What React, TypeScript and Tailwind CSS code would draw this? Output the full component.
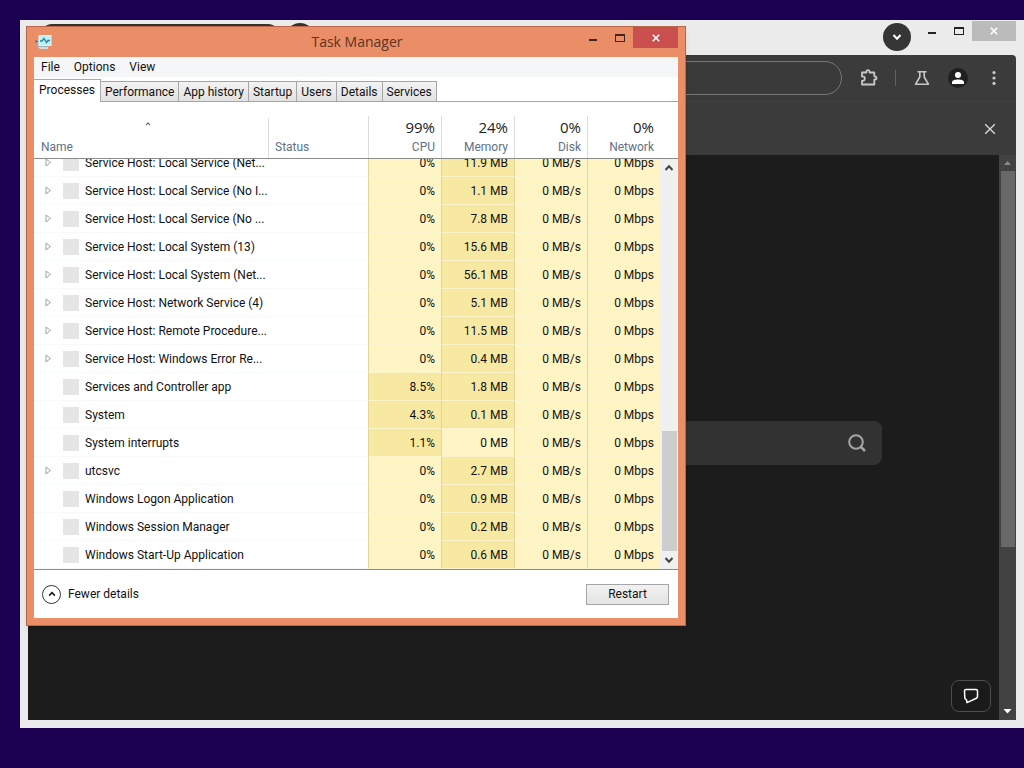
import React from "react";
import { clsx } from "clsx";

type Process = {
  name: string;
  cpu: string;
  memory: string;
  group?: boolean;
};

const processes: Process[] = [
  { name: "Service Host: Local Service (Net...", cpu: "0%", memory: "11.9 MB", group: true },
  { name: "Service Host: Local Service (No I...", cpu: "0%", memory: "1.1 MB", group: true },
  { name: "Service Host: Local Service (No ...", cpu: "0%", memory: "7.8 MB", group: true },
  { name: "Service Host: Local System (13)", cpu: "0%", memory: "15.6 MB", group: true },
  { name: "Service Host: Local System (Net...", cpu: "0%", memory: "56.1 MB", group: true },
  { name: "Service Host: Network Service (4)", cpu: "0%", memory: "5.1 MB", group: true },
  { name: "Service Host: Remote Procedure...", cpu: "0%", memory: "11.5 MB", group: true },
  { name: "Service Host: Windows Error Re...", cpu: "0%", memory: "0.4 MB", group: true },
  { name: "Services and Controller app", cpu: "8.5%", memory: "1.8 MB" },
  { name: "System", cpu: "4.3%", memory: "0.1 MB" },
  { name: "System interrupts", cpu: "1.1%", memory: "0 MB" },
  { name: "utcsvc", cpu: "0%", memory: "2.7 MB", group: true },
  { name: "Windows Logon Application", cpu: "0%", memory: "0.9 MB" },
  { name: "Windows Session Manager", cpu: "0%", memory: "0.2 MB" },
  { name: "Windows Start-Up Application", cpu: "0%", memory: "0.6 MB" },
];

const totals = [
  { label: "CPU", value: "99%" },
  { label: "Memory", value: "24%" },
  { label: "Disk", value: "0%" },
  { label: "Network", value: "0%" },
];

const tabs = ["Performance", "App history", "Startup", "Users", "Details", "Services"];

const Chevron = ({ down = false, className }: { down?: boolean; className?: string }) => (
  <svg viewBox="0 0 10 10" className={className} fill="none" stroke="currentColor" strokeWidth="2" aria-hidden="true">
    <path d={down ? "M1.5 3 L5 6.8 L8.5 3" : "M1.5 7 L5 3.2 L8.5 7"} />
  </svg>
);

const Cross = ({ className, width = 2 }: { className?: string; width?: number }) => (
  <svg viewBox="0 0 10 10" className={className} fill="none" stroke="currentColor" strokeWidth={width} aria-hidden="true">
    <path d="M1 1 L9 9 M9 1 L1 9" />
  </svg>
);

const Columns = () => (
  <colgroup>
    <col />
    <col className="w-[100px]" />
    <col className="w-[73px]" />
    <col className="w-[73px]" />
    <col className="w-[73px]" />
    <col className="w-[73px]" />
  </colgroup>
);

const ValueCell = ({ value, hot }: { value: string; hot?: boolean }) => (
  <td
    className={clsx(
      "border-l border-l-[#e2d596] border-b border-b-[#fbf3c9] pr-1.5 text-right whitespace-nowrap",
      hot ? "bg-[#f8e9a2]" : "bg-[#fff4c4]"
    )}
  >
    {value}
  </td>
);

const BrowserBar = () => (
  <>
    <div className="flex h-[35px] items-start pl-3">
      <div className="mt-1 h-[31px] w-60 rounded-t-xl bg-[#3a302c]" />
      <div className="mt-[3px] ml-1.5 size-7 rounded-full bg-[#3a302c]" />
      <button
        aria-label="Search tabs"
        className="mt-[3px] mr-[17px] ml-auto flex size-7 items-center justify-center rounded-full bg-[#353535] text-white"
      >
        <Chevron down className="size-2.5" />
      </button>
      <button aria-label="Minimize" className="flex h-4 w-[14px] items-end justify-start pb-0.5">
        <span className="h-0.5 w-2 bg-[#222]" />
      </button>
      <button aria-label="Maximize" className="mt-[7px] ml-3 h-2 w-2.5 border border-t-2 border-[#222]" />
      <button
        aria-label="Close"
        className="mt-px ml-2 flex h-5 w-11 items-center justify-center bg-[#bbb] text-white"
      >
        <Cross className="size-2" />
      </button>
    </div>
    <div className="flex h-[46px] items-center rounded-tr-sm bg-[#3b3b3b] pr-3.5 text-[#c9c9c9]">
      <input
        aria-label="Address"
        className="h-[34px] min-w-0 flex-1 rounded-full border border-[#777] bg-[#3a3a3a] px-4 outline-none"
      />
      <button aria-label="Extensions" className="ml-[18px]">
        <svg viewBox="0 0 18 18" className="size-[18px]" fill="none" stroke="currentColor" strokeWidth="1.8" strokeLinejoin="round">
          <path d="M2 3.5 H6.3 V2.8 a1.6 1.6 0 0 1 3.2 0 V3.5 H14.3 V7.3 H14.9 a1.6 1.6 0 0 1 0 3.2 H14.3 V15.5 H2 V11.8 H2.6 a2 2 0 0 0 0 -4.4 H2 Z" />
        </svg>
      </button>
      <span className="ml-[17px] h-4 w-px bg-[#626262]" />
      <button aria-label="Experiments" className="ml-[18px]">
        <svg viewBox="0 0 16 16" className="size-4" fill="none" stroke="currentColor" strokeWidth="1.6" strokeLinejoin="round">
          <path d="M3.5 1.8 H12.5 M5.8 2 V7 L1.6 14.2 H14.4 L10.2 7 V2" />
        </svg>
      </button>
      <button
        aria-label="Profile"
        className="ml-[18px] flex size-5 items-center justify-center rounded-full bg-[#202020] text-white"
      >
        <svg viewBox="0 0 14 14" className="size-3.5" fill="currentColor">
          <circle cx="7" cy="4" r="3" />
          <path d="M1 13 V11 C1 7.6 13 7.6 13 11 V13 Z" />
        </svg>
      </button>
      <button aria-label="Menu" className="ml-[18px]">
        <svg viewBox="0 0 16 16" className="size-4" fill="currentColor">
          <circle cx="8" cy="2.6" r="1.6" />
          <circle cx="8" cy="8" r="1.6" />
          <circle cx="8" cy="13.4" r="1.6" />
        </svg>
      </button>
    </div>
    <div className="flex h-[54px] items-center justify-end border-t border-[#414141] bg-[#3b3b3b] pr-5 text-[#d4d4d4]">
      <button aria-label="Dismiss">
        <Cross className="size-3" width={1.2} />
      </button>
    </div>
  </>
);

const Browser = () => (
  <main className="flex flex-1 flex-col bg-[#ebebeb] px-2 pb-2">
    <BrowserBar />
    <div className="flex flex-1 bg-[#1c1c1c]">
      <div className="flex flex-1 flex-col items-end justify-between pr-2 pb-2">
        <div className="mt-[266px] mr-[109px] flex h-11 w-[700px] items-center rounded-lg bg-[#323232] pr-4">
          <input aria-label="Search" className="min-w-0 flex-1 bg-transparent px-4 text-white outline-none" />
          <button aria-label="Submit search" className="text-[#a5a5a5]">
            <svg viewBox="0 0 18 18" className="size-[18px]" fill="none" stroke="currentColor" strokeWidth="2">
              <circle cx="8" cy="8" r="6.8" />
              <path d="M12.6 12.6 L17 17" strokeWidth="2.6" />
            </svg>
          </button>
        </div>
        <button
          aria-label="Feedback"
          className="flex h-8 w-10 items-center justify-center rounded-lg border border-[#4d4d4d] bg-[#1a1a1a] text-white"
        >
          <svg viewBox="0 0 16 16" className="size-4" fill="none" stroke="currentColor" strokeWidth="1.5" strokeLinejoin="round">
            <path d="M3 1.5 H13 Q14.5 1.5 14.5 3 V8.6 Q14.5 9.8 13.4 10.3 L4 14.6 L3.4 11.6 Q2 11.2 1.8 9.8 L1.5 3 Q1.5 1.5 3 1.5 Z" />
          </svg>
        </button>
      </div>
      <div className="flex w-[17px] flex-col items-center bg-[#424242]">
        <svg viewBox="0 0 17 16" className="h-4 w-full" fill="#8a8a8a">
          <path d="M5 10 H12 L8.5 6 Z" />
        </svg>
        <div className="h-[376px] w-3.5 bg-[#686868]" />
        <svg viewBox="0 0 17 16" className="mt-auto h-4 w-full" fill="#fff">
          <path d="M4.5 5 H12.5 L8.5 9.5 Z" />
        </svg>
      </div>
    </div>
  </main>
);

const TitleBar = () => (
  <header className="flex h-[30px] items-start">
    <svg viewBox="0 0 18 16" className="mt-[7px] ml-px h-4 w-[18px]">
      <path d="M3 5 L1 8 L3 14 H13 V11 Z" fill="#9fb0b4" />
      <rect x="4" y="1.5" width="12" height="10" fill="#bff0f5" stroke="#e4f3f3" />
      <path d="M5 7 L7 7 L9 4.5 L11.5 8.5 L13 6.5 H15" fill="none" stroke="#258a9c" strokeWidth="1.4" />
      <path d="M3 13 H13 V15 H5 Z" fill="#d6dada" />
      <path d="M0.5 6 L3 7.5 L0.5 9 Z" fill="#386d77" />
    </svg>
    <h1 className="flex-1 pt-1 pl-20 text-center font-['Open_Sans',sans-serif] text-[14px] leading-[22px] text-[#5d3325]">
      Task Manager
    </h1>
    <button aria-label="Minimize" className="mt-3 ml-2 h-0.5 w-2 bg-[#45251a]" />
    <button aria-label="Maximize" className="mt-[7px] mr-2 ml-[18px] h-2 w-2.5 border border-t-2 border-[#45251a]" />
    <button aria-label="Close" className="flex h-[21px] w-[45px] items-center justify-center bg-[#c9504f] text-white">
      <Cross className="size-2" />
    </button>
  </header>
);

const ProcessTable = () => (
  <div>
    <div className="border-b border-[#8b8b8b] pr-[18px]">
      <table className="w-full table-fixed">
        <Columns />
        <thead>
          <tr className="h-14 align-bottom leading-4 text-[#5f7186]">
            <th className="text-left font-normal">
              <div className="flex justify-center pr-1.5 pb-3">
                <Chevron className="size-1.5" />
              </div>
              <span className="block pb-[3px] pl-[7px]">Name</span>
            </th>
            <th className="text-left font-normal">
              <span className="flex h-10 items-end border-l border-[#dcdcdc] pb-[3px] pl-1.5">Status</span>
            </th>
            {totals.map((total) => (
              <th key={total.label} className="font-normal">
                <span className="flex h-[42px] flex-col items-end justify-end border-l border-[#dcdcdc] pr-1.5 pb-[3px]">
                  <span className="font-['Open_Sans',sans-serif] text-[15px] leading-6 text-[#222]">{total.value}</span>
                  {total.label}
                </span>
              </th>
            ))}
          </tr>
        </thead>
      </table>
    </div>
    <div className="flex h-[410px]">
      {/* list is scrolled to its end, so the first row is cut */}
      <div className="flex h-full flex-1 flex-col justify-end overflow-hidden">
        <table className="w-full table-fixed border-separate border-spacing-0">
          <Columns />
          <tbody>
            {processes.map((process, i) => (
              <tr key={i} className="h-7">
                <td className="border-b border-[#f6fafa]">
                  <div className="flex items-center">
                    <span className="flex w-[29px] shrink-0 justify-center">
                      {process.group && (
                        <svg viewBox="0 0 7 9" className="h-[9px] w-[7px]" fill="none" stroke="#a0a0a0">
                          <path d="M1 1 V8 L5.5 4.5 Z" />
                        </svg>
                      )}
                    </span>
                    <span className="mr-1.5 size-4 shrink-0 bg-[#e5e5e5]" />
                    <span className="whitespace-nowrap">{process.name}</span>
                  </div>
                </td>
                <td className="border-b border-[#f6fafa]" />
                <ValueCell value={process.cpu} hot={process.cpu !== "0%"} />
                <ValueCell value={process.memory} hot={process.memory !== "0 MB"} />
                <ValueCell value="0 MB/s" />
                <ValueCell value="0 Mbps" />
              </tr>
            ))}
          </tbody>
        </table>
      </div>
      <div className="flex w-[18px] flex-col items-center bg-[#f0f0f0] text-[#444]">
        <Chevron className="mt-1 size-2.5" />
        <div className="mt-auto h-[120px] w-[15px] bg-[#cdcdcd]" />
        <Chevron down className="my-1 size-2.5" />
      </div>
    </div>
  </div>
);

const TaskManager = () => (
  <section className="absolute top-[26px] left-[26px] w-[660px] border border-[#b9674a] bg-[#e98e66] px-[7px] pb-[7px] text-[12px] text-[#111] shadow-md">
    <TitleBar />
    <div className="bg-white">
      <nav className="flex h-5 items-center gap-3.5 bg-[#f5f6f7] pl-[7px]">
        <button>File</button>
        <button>Options</button>
        <button>View</button>
      </nav>
      <div className="flex h-[25px] items-end" role="tablist">
        <button
          role="tab"
          aria-selected="true"
          className="h-[23px] w-[67px] border-t border-r border-[#aaa] bg-white pb-0.5"
        >
          Processes
        </button>
        {tabs.map((tab) => (
          <button
            key={tab}
            role="tab"
            aria-selected="false"
            className="h-[21px] border border-l-0 border-[#a5a5a5] bg-linear-to-b from-[#f3f3f3] to-[#e2e2e2] px-1"
          >
            {tab}
          </button>
        ))}
        <span className="flex-1 self-stretch border-b border-[#a5a5a5]" />
      </div>
      <ProcessTable />
      <footer className="flex h-[49px] items-center justify-between border-t border-[#8b8b8b] pr-[9px] pl-2">
        <button className="flex items-center gap-[7px]">
          <span className="flex size-[19px] items-center justify-center rounded-full border border-[#333]">
            <Chevron className="size-2" />
          </span>
          Fewer details
        </button>
        <button className="h-[21px] w-[83px] border border-[#a5a5a5] bg-linear-to-b from-[#f2f2f2] to-[#e4e4e4]">
          Restart
        </button>
      </footer>
    </div>
  </section>
);

export default function App() {
  return (
    <div className="relative flex min-h-screen flex-col overflow-hidden bg-[#1b0052] pt-5 pb-10 pl-5 font-[Roboto,sans-serif]">
      <Browser />
      <TaskManager />
    </div>
  );
}
